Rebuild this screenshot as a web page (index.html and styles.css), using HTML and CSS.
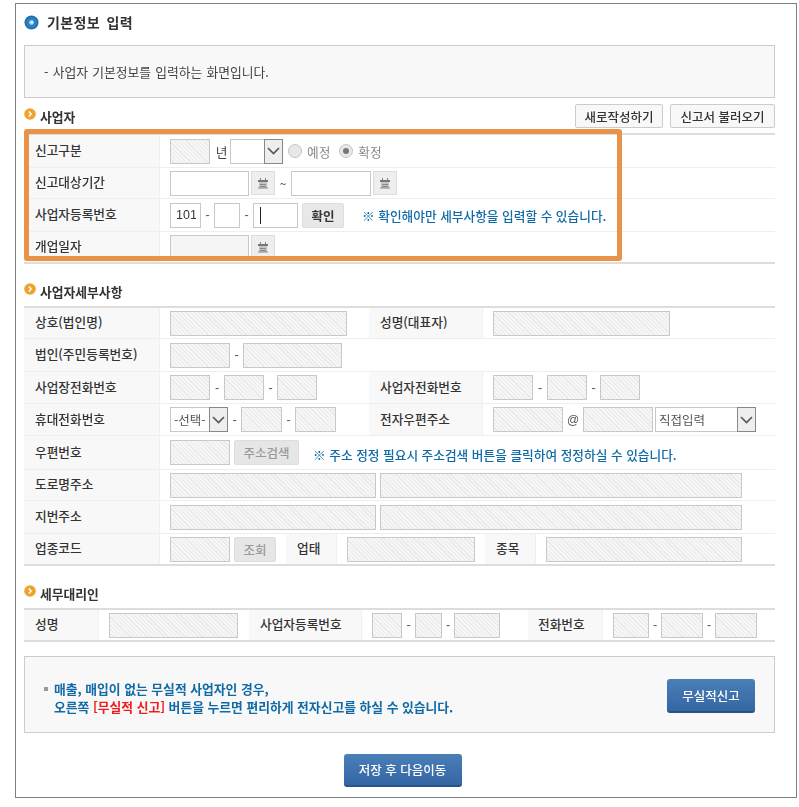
FILE: index.html
```html
<!DOCTYPE html>
<html lang="ko">
<head>
<meta charset="utf-8">
<title>기본정보 입력</title>
<link rel="stylesheet" href="styles.css">
</head>
<body>
<main class="frame">
  <h1 class="page-title"><svg class="ico-blue" width="15" height="15" viewBox="0 0 16 16"><circle cx="8" cy="8" r="7.500" fill="#1a6fb0"/><circle cx="8" cy="8" r="6" fill="#2a7fc0"/><circle cx="8" cy="8" r="2.600" fill="#9cc8ea"/><path d="M6.500 8h3M8.400 6.800 9.600 8 8.400 9.200" stroke="#fff" stroke-width="1" fill="none"/></svg><span>기본정보 입력</span></h1>
  <p class="info-box">- 사업자 기본정보를 입력하는 화면입니다.</p>

  <div class="sec-head first">
    <h2 class="sec-title"><svg class="ico-orange" width="12" height="12" viewBox="0 0 12 12"><circle cx="6" cy="6" r="5.800" fill="#eda32f"/><path d="M4.800 3.500 7.200 6 4.800 8.500" stroke="#fff" stroke-width="1.400" fill="none"/></svg>사업자</h2>
    <div class="head-btns">
      <button class="btn-white b1" type="button">새로작성하기</button>
      <button class="btn-white b2" type="button">신고서 불러오기</button>
    </div>
  </div>
  <section class="tbl highlighted">
    <div class="row h33">
      <div class="lab c136">신고구분</div>
      <div class="val grow">
        <input class="fld hatch w40" disabled>
        <span class="unit">년</span>
        <span class="sel-wrap w53"><select class="sel"><option></option></select><span class="sel-arrow"><svg width="13" height="8" viewBox="0 0 13 8"><path d="M1 1l5.500 5.500L12 1" stroke="#555" stroke-width="1.600" fill="none"/></svg></span></span>
        <span class="radio r1"></span><span class="radio-lab">예정</span>
        <span class="radio r2 on"></span><span class="radio-lab">확정</span>
      </div>
    </div>
    <div class="row h31">
      <div class="lab c136">신고대상기간</div>
      <div class="val grow">
        <input class="fld w79">
        <button class="cal" type="button" aria-label="달력"><svg width="12" height="11" viewBox="0 0 12 11"><path d="M1 2h10v2H1z" fill="#777"/><path d="M2 4h8v6H2z" fill="#c4c4c4"/><path d="M1 10h10M3 6.500h6M3 8.500h6" stroke="#888"/><path d="M3.500 0v2M8.500 0v2" stroke="#888"/></svg></button>
        <span class="tilde">~</span>
        <input class="fld w80">
        <button class="cal" type="button" aria-label="달력"><svg width="12" height="11" viewBox="0 0 12 11"><path d="M1 2h10v2H1z" fill="#777"/><path d="M2 4h8v6H2z" fill="#c4c4c4"/><path d="M1 10h10M3 6.500h6M3 8.500h6" stroke="#888"/><path d="M3.500 0v2M8.500 0v2" stroke="#888"/></svg></button>
      </div>
    </div>
    <div class="row h33">
      <div class="lab c136">사업자등록번호</div>
      <div class="val grow">
        <input class="fld w31 num" value="101">
        <span class="dash d13">-</span>
        <input class="fld w26">
        <span class="dash d13">-</span>
        <span class="caret-wrap"><input class="fld w45"><i class="caret"></i></span>
        <button class="btn-gray confirm" type="button">확인</button>
        <span class="note n1">※ 확인해야만 세부사항을 입력할 수 있습니다.</span>
      </div>
    </div>
    <div class="row h30 last">
      <div class="lab c136">개업일자</div>
      <div class="val grow">
        <input class="fld w79 plain" disabled>
        <button class="cal" type="button" aria-label="달력"><svg width="12" height="11" viewBox="0 0 12 11"><path d="M1 2h10v2H1z" fill="#777"/><path d="M2 4h8v6H2z" fill="#c4c4c4"/><path d="M1 10h10M3 6.500h6M3 8.500h6" stroke="#888"/><path d="M3.500 0v2M8.500 0v2" stroke="#888"/></svg></button>
      </div>
    </div>
    <div class="orange-box"></div>
  </section>

  <h2 class="sec-title s2"><svg class="ico-orange" width="12" height="12" viewBox="0 0 12 12"><circle cx="6" cy="6" r="5.800" fill="#eda32f"/><path d="M4.800 3.500 7.200 6 4.800 8.500" stroke="#fff" stroke-width="1.400" fill="none"/></svg>사업자세부사항</h2>
  <section class="tbl">
    <div class="row h31">
      <div class="lab c136">상호(법인명)</div>
      <div class="val c209"><input class="fld hatch w177" disabled></div>
      <div class="lab c114">성명(대표자)</div>
      <div class="val grow"><input class="fld hatch w177" disabled></div>
    </div>
    <div class="row h33">
      <div class="lab c136">법인(주민등록번호)</div>
      <div class="val grow">
        <input class="fld hatch w60" disabled><span class="dash d13">-</span><input class="fld hatch w99" disabled>
      </div>
    </div>
    <div class="row h32">
      <div class="lab c136">사업장전화번호</div>
      <div class="val c209">
        <input class="fld hatch w40" disabled><span class="dash d14">-</span><input class="fld hatch w40" disabled><span class="dash d13">-</span><input class="fld hatch w40" disabled>
      </div>
      <div class="lab c114">사업자전화번호</div>
      <div class="val grow">
        <input class="fld hatch w40" disabled><span class="dash d14">-</span><input class="fld hatch w40" disabled><span class="dash d13">-</span><input class="fld hatch w40" disabled>
      </div>
    </div>
    <div class="row h32">
      <div class="lab c136">휴대전화번호</div>
      <div class="val c209">
        <span class="sel-wrap w58"><select class="sel"><option>-선택-</option></select><span class="sel-arrow"><svg width="13" height="8" viewBox="0 0 13 8"><path d="M1 1l5.500 5.500L12 1" stroke="#555" stroke-width="1.600" fill="none"/></svg></span></span>
        <span class="dash d13">-</span><input class="fld hatch w41" disabled><span class="dash d13">-</span><input class="fld hatch w41" disabled>
      </div>
      <div class="lab c114">전자우편주소</div>
      <div class="val grow">
        <input class="fld hatch w70" disabled><span class="at">@</span><input class="fld hatch w70" disabled>
        <span class="sel-wrap w101 ml2"><select class="sel"><option>직접입력</option></select><span class="sel-arrow"><svg width="13" height="8" viewBox="0 0 13 8"><path d="M1 1l5.500 5.500L12 1" stroke="#555" stroke-width="1.600" fill="none"/></svg></span></span>
      </div>
    </div>
    <div class="row h34">
      <div class="lab c136">우편번호</div>
      <div class="val grow">
        <input class="fld hatch w60" disabled>
        <button class="btn-dis search" type="button" disabled>주소검색</button>
        <span class="note n2">※ 주소 정정 필요시 주소검색 버튼을 클릭하여 정정하실 수 있습니다.</span>
      </div>
    </div>
    <div class="row h31">
      <div class="lab c136">도로명주소</div>
      <div class="val grow"><input class="fld hatch w206" disabled><input class="fld hatch w362 ml4" disabled></div>
    </div>
    <div class="row h33">
      <div class="lab c136">지번주소</div>
      <div class="val grow"><input class="fld hatch w206" disabled><input class="fld hatch w362 ml4" disabled></div>
    </div>
    <div class="row h30 last">
      <div class="lab c136">업종코드</div>
      <div class="val c126">
        <input class="fld hatch w60" disabled>
        <button class="btn-dis lookup" type="button" disabled>조회</button>
      </div>
      <div class="lab c51">업태</div>
      <div class="val c148"><input class="fld hatch w128" disabled></div>
      <div class="lab c51">종목</div>
      <div class="val grow"><input class="fld hatch w196" disabled></div>
    </div>
  </section>

  <h2 class="sec-title s3"><svg class="ico-orange" width="12" height="12" viewBox="0 0 12 12"><circle cx="6" cy="6" r="5.800" fill="#eda32f"/><path d="M4.800 3.500 7.200 6 4.800 8.500" stroke="#fff" stroke-width="1.400" fill="none"/></svg>세무대리인</h2>
  <section class="tbl">
    <div class="row h30 last">
      <div class="lab c75">성명</div>
      <div class="val c150"><input class="fld hatch w129" disabled></div>
      <div class="lab c113">사업자등록번호</div>
      <div class="val c166">
        <input class="fld hatch w30" disabled><span class="dash d13">-</span><input class="fld hatch w27" disabled><span class="dash d12">-</span><input class="fld hatch w46" disabled>
      </div>
      <div class="lab c75 tight">전화번호</div>
      <div class="val grow">
        <input class="fld hatch w36" disabled><span class="dash d12">-</span><input class="fld hatch w42" disabled><span class="dash d12">-</span><input class="fld hatch w42" disabled>
      </div>
    </div>
  </section>

  <div class="notice">
    <p class="notice-text"><span class="bullet"></span>매출, 매입이 없는 무실적 사업자인 경우,<br>오른쪽 <em>[무실적 신고]</em> 버튼을 누르면 편리하게 전자신고를 하실 수 있습니다.</p>
    <button class="btn-blue zero" type="button">무실적신고</button>
  </div>
  <div class="save-bar"><button class="btn-blue save" type="button">저장 후 다음이동</button></div>
</main>
</body>
</html>
```

FILE: styles.css
```css
* { box-sizing: border-box; }
html, body { margin: 0; padding: 0; background: #fff; }
body {
  font-family: "Noto Sans CJK KR", "Noto Sans", "Liberation Sans", sans-serif;
  font-size: 12.700px;
  color: #333;
  overflow: hidden;
}
.frame {
  width: 782px;
  height: 795px;
  margin: 3px 0 0 15px;
  padding: 0 21px 0 8px;
  border: 1px solid #808080;
  filter: blur(0.4px);
}
.page-title {
  display: flex;
  align-items: center;
  height: 20px;
  margin: 8px 0 0;
  font-size: 14px;
  font-weight: 700;
  color: #333;
  letter-spacing: 0.400px;
  word-spacing: 2px;
}
.ico-blue { margin-right: 8px; flex: none; }
.info-box {
  height: 53px;
  margin: 13px 0 0;
  padding-left: 19px;
  font-size: 12.800px;
  line-height: 51px;
  word-spacing: 0.600px;
  background: #f8f8f8;
  border: 1px solid #ccc;
  color: #444;
}
.sec-head { display: flex; justify-content: space-between; align-items: center; }
.sec-head.first { height: 24px; margin-top: 6px; margin-bottom: 5px; }
.sec-title {
  display: flex;
  align-items: center;
  height: 20px;
  margin: 0;
  font-size: 12.800px;
  font-weight: 700;
  color: #333;
}
.sec-title.s2 { margin: 17px 0 5px; }
.sec-title.s3 { margin: 17px 0 5px; }
.ico-orange { margin-right: 4px; position: relative; top: -2px; flex: none; }
.head-btns { display: flex; gap: 7px; }
.btn-white {
  height: 24px;
  padding: 0;
  background: #f8f8f8;
  border: 1px solid #ccc;
  border-radius: 2px;
  font: 500 12.500px "Noto Sans CJK KR", sans-serif;
  color: #333;
}
.b1 { width: 88px; }
.b2 { width: 105px; }

.tbl { position: relative; border-top: 2px solid #ddd; border-bottom: 2px solid #ddd; }
.row { display: flex; align-items: stretch; border-bottom: 1px solid #eee; }
.row.last { border-bottom: 0; }
.h30 { height: 30px; }
.h31 { height: 31px; }
.h32 { height: 32px; }
.h33 { height: 33px; }
.h34 { height: 34px; }
.lab {
  display: flex;
  align-items: center;
  flex: none;
  padding: 0 0 3px 11px;
  background: #f8f8f8;
  font-weight: 500;
  color: #333;
  white-space: nowrap;
  border-right: 1px solid #f0f0f0;
}
.lab.tight { padding-left: 10px; }
.c136 { width: 136px; }
.c114 { width: 114px; }
.c51 { width: 51px; }
.c75 { width: 75px; }
.c113 { width: 113px; }
.val { display: flex; align-items: center; flex: none; padding-left: 10px; white-space: nowrap; }
.val.grow { flex: 1; }
.c209 { width: 209px; }
.c126 { width: 126px; }
.c148 { width: 148px; }
.c150 { width: 150px; }
.c166 { width: 166px; }

.fld {
  display: block;
  flex: none;
  height: 25px;
  padding: 0 4px;
  background: #fff;
  border: 1px solid #c8c8c8;
  border-radius: 0;
  font: 12.500px "Liberation Sans", sans-serif;
  color: #333;
  outline: 0;
}
.fld.hatch {
  background: repeating-linear-gradient(45deg, #f6f6f6 0, #f6f6f6 2px, #e9e9e9 2px, #e9e9e9 3px);
}
.fld.plain { background: #f5f5f5; }
.fld.num { padding-left: 5px; }
.w26 { width: 26px; } .w27 { width: 27px; } .w30 { width: 30px; } .w31 { width: 31px; }
.w36 { width: 36px; } .w40 { width: 40px; } .w41 { width: 41px; } .w42 { width: 42px; }
.w45 { width: 45px; } .w46 { width: 46px; } .w53 { width: 53px; } .w58 { width: 58px; }
.w60 { width: 60px; } .w70 { width: 70px; } .w79 { width: 79px; } .w80 { width: 80px; }
.w99 { width: 99px; } .w101 { width: 101px; } .w128 { width: 128px; } .w129 { width: 129px; }
.w177 { width: 177px; } .w196 { width: 196px; } .w206 { width: 206px; } .w362 { width: 362px; }
.ml2 { margin-left: 2px; }
.ml4 { margin-left: 4px; }

.unit { width: 20px; padding-left: 3px; text-align: center; color: #444; }
.dash { flex: none; text-align: center; color: #555; font-family: "Liberation Sans", sans-serif; }
.d12 { width: 12px; } .d13 { width: 13px; } .d14 { width: 14px; }
.at { width: 20px; text-align: center; color: #555; font: 12px "Liberation Sans", sans-serif; }
.tilde { width: 16px; text-align: center; color: #555; }

.sel-wrap { position: relative; display: block; flex: none; height: 25px; }
.sel {
  display: block;
  width: 100%;
  height: 25px;
  padding: 0 0 0 3px;
  appearance: none;
  background: #fff;
  border: 1px solid #c8c8c8;
  border-radius: 0;
  font: 12.500px "Noto Sans CJK KR", sans-serif;
  color: #555;
}
.sel-arrow {
  position: absolute;
  top: 0;
  right: 0;
  width: 19px;
  height: 25px;
  display: flex;
  align-items: center;
  justify-content: center;
  background: #eee;
  border: 1px solid #888;
  pointer-events: none;
}
.radio {
  flex: none;
  width: 14px;
  height: 14px;
  border-radius: 50%;
  background: #e8e8e8;
  border: 1px solid #c4c4c4;
}
.radio.r1 { margin-left: 5px; }
.radio.r2 { margin-left: 9px; position: relative; }
.radio.on::after {
  content: "";
  position: absolute;
  left: 3px;
  top: 3px;
  width: 6px;
  height: 6px;
  border-radius: 50%;
  background: #777;
}
.radio-lab { margin-left: 5px; color: #888; }

.cal {
  flex: none;
  display: flex;
  align-items: center;
  justify-content: center;
  width: 24px;
  height: 24px;
  margin-left: 2px;
  padding: 0;
  background: #eee;
  border: 1px solid #ddd;
}
.caret-wrap { position: relative; display: block; flex: none; }
.caret { position: absolute; left: 7px; top: 4px; width: 1px; height: 17px; background: #222; }
.btn-gray {
  flex: none;
  height: 25px;
  padding: 0;
  background: #e8e8e8;
  border: 1px solid #ddd;
  border-radius: 2px;
  font: 700 12.500px "Noto Sans CJK KR", sans-serif;
  color: #333;
}
.confirm { width: 42px; margin-left: 4px; }
.note { color: #0f6aa6; font-size: 12.700px; font-weight: 500; white-space: nowrap; }
.n1 { margin-left: 18px; }
.n2 { margin-left: 14px; position: relative; top: 2px; }
.btn-dis {
  flex: none;
  height: 25px;
  padding: 0;
  background: #e6e6e6;
  border: 1px solid #ddd;
  border-radius: 2px;
  font: 500 12.500px "Noto Sans CJK KR", sans-serif;
  color: #999;
}
.search { width: 65px; margin-left: 4px; }
.lookup { width: 42px; margin-left: 4px; }

.orange-box {
  position: absolute;
  left: 0;
  top: -6px;
  width: 598px;
  height: 132px;
  border: 5px solid #e8924a;
  border-radius: 3px;
  pointer-events: none;
}

.notice {
  display: flex;
  align-items: center;
  justify-content: space-between;
  height: 77px;
  margin-top: 14px;
  padding: 3px 19px 0 29px;
  background: #f8f8f8;
  border: 1px solid #ccc;
}
.notice-text {
  margin: 3px 0 0;
  font-size: 12.800px;
  font-weight: 700;
  line-height: 18px;
  color: #0f6aa6;
}
.notice-text em { font-style: normal; color: #f01c1c; }
.bullet {
  display: inline-block;
  width: 4px;
  height: 4px;
  margin-right: 6px;
  margin-left: -10px;
  vertical-align: 3px;
  background: #999;
}
.btn-blue {
  flex: none;
  padding: 0;
  color: #fff;
  background: linear-gradient(#4a7fb8, #3566a4);
  border: 0;
  border-bottom: 2px solid #2a5288;
  border-radius: 3px;
  font: 500 12.500px "Noto Sans CJK KR", sans-serif;
}
.zero { width: 88px; height: 34px; }
.save-bar { display: flex; justify-content: center; margin-top: 21px; padding-left: 6px; }
.save { width: 118px; height: 33px; }
```
